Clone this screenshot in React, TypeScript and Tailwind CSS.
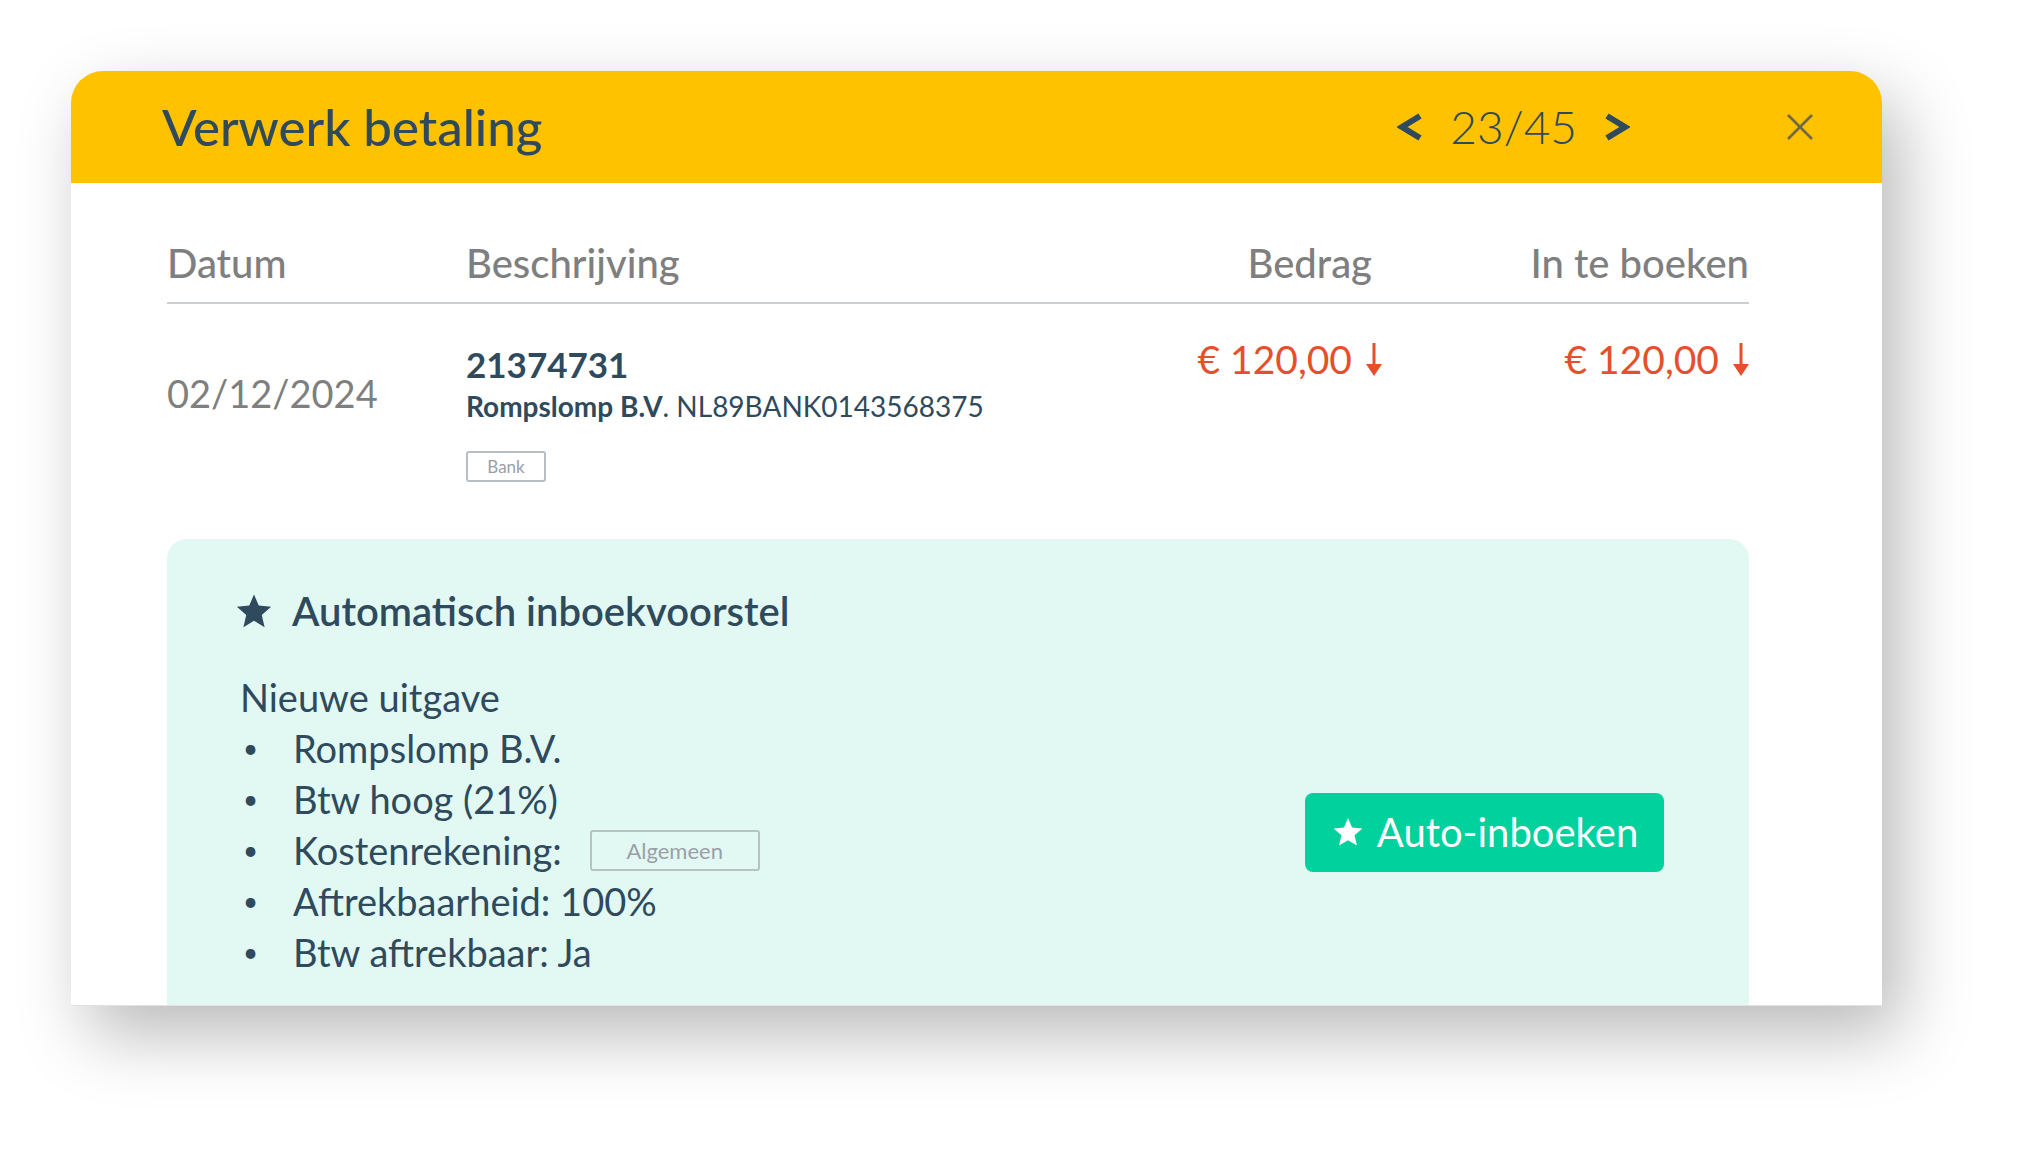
import React from "react";

const dark = "text-[#2e4a5c]";

const Star = ({ className }: { className?: string }) => (
  <svg viewBox="0 0 24 24" className={className} fill="currentColor">
    <polygon points="12,1.5 15,8.6 22.8,9.3 16.9,14.5 18.7,22.2 12,18.1 5.3,22.2 7.1,14.5 1.2,9.3 9,8.6" />
  </svg>
);

const DownArrow = () => (
  <svg viewBox="0 0 16 33" className="w-[16px] h-[33px] ml-[14px]" fill="currentColor">
    <rect x="6.5" y="0" width="3" height="24" />
    <polygon points="0,21 16,21 8,33" />
  </svg>
);

const Chevron = ({ dir }: { dir: "left" | "right" }) => (
  <svg viewBox="0 0 26 28" className="w-[26px] h-[28px]" fill="none" stroke="currentColor" strokeWidth="6" strokeLinejoin="miter">
    {dir === "left" ? <polyline points="23,3 5,14 23,25" /> : <polyline points="3,3 21,14 3,25" />}
  </svg>
);

const Amount = () => (
  <div className="flex items-center text-[#e5502b] text-[39px] leading-[44px] -mt-[5px]">
    <span>€ 120,00</span>
    <DownArrow />
  </div>
);

const items = ["Rompslomp B.V.", "Btw hoog (21%)", "Kostenrekening:", "Aftrekbaarheid: 100%", "Btw aftrekbaar: Ja"];

export default function App() {
  return (
    <div
      className="w-[2026px] h-[1153px] bg-white overflow-hidden pl-[71px] pt-[71px]"
      style={{ fontFamily: "Lato, 'Noto Sans', sans-serif" }}
    >
      <div className="w-[1811px] h-[935px] bg-white rounded-t-[32px] overflow-hidden shadow-[18px_28px_70px_rgba(0,0,0,0.28)] flex flex-col border-b border-[#e2e2e2]">
        {/* header */}
        <div className="h-[112px] shrink-0 bg-[#ffc200] flex items-center pl-[91px] pr-[69px]">
          <h1 className={`flex-1 text-[51px] font-medium ${dark}`}>Verwerk betaling</h1>
          <div className={`flex items-center gap-[27px] ${dark}`}>
            <Chevron dir="left" />
            <span className="text-[46px] font-light leading-none">23/45</span>
            <Chevron dir="right" />
          </div>
          <svg viewBox="0 0 26 26" className="w-[26px] h-[26px] ml-[157px] text-[#6f6a43]" stroke="currentColor" strokeWidth="2.6">
            <line x1="1" y1="1" x2="25" y2="25" />
            <line x1="25" y1="1" x2="1" y2="25" />
          </svg>
        </div>

        {/* body */}
        <div className="flex-1 pl-[96px] pr-[133px] pt-[58px]">
          <div className="grid grid-cols-[299px_1fr_260px_367px] text-[40px] font-medium text-[#7f7f7f] leading-[44px] pb-[17px] border-b-2 border-[#c8cfd5]">
            <div>Datum</div>
            <div>Beschrijving</div>
            <div className="text-right pr-[10px]">Bedrag</div>
            <div className="text-right">In te boeken</div>
          </div>

          <div className="grid grid-cols-[299px_1fr_260px_367px] pt-[38px]">
            <div className="text-[38px] text-[#7f7f7f] pt-[29px] leading-[44px]">02/12/2024</div>
            <div className={dark}>
              <div className="text-[35px] font-bold leading-[44px]">21374731</div>
              <div className="text-[28px] leading-[36px] mt-[2px]">
                <span className="font-bold">Rompslomp B.V</span>. NL89BANK0143568375
              </div>
              <div className="mt-[27px] w-[80px] h-[31px] border-2 border-[#b8bec3] rounded-[3px] text-[17px] text-[#9aa0a6] flex items-center justify-center">
                Bank
              </div>
            </div>
            <div className="flex justify-end items-start">
              <Amount />
            </div>
            <div className="flex justify-end items-start">
              <Amount />
            </div>
          </div>

          {/* suggestion panel */}
          <div className="mt-[57px] bg-[#e2f8f3] rounded-t-[20px] h-[600px] pl-[67px] pr-[85px] pt-[52px]">
            <div className={`flex items-center ${dark}`}>
              <Star className="w-[40px] h-[38px]" />
              <span className="ml-[18px] text-[40px] font-semibold leading-[40px]">Automatisch inboekvoorstel</span>
            </div>
            <div className={`flex items-center mt-[41px] ${dark}`}>
              <div className="flex-1 text-[38px] leading-[51px]">
                <div className="pl-[6px]">Nieuwe uitgave</div>
                <ul>
                  {items.map((t) => (
                    <li key={t} className="flex items-center">
                      <span className="w-[59px] pl-[9px] text-[26px]">•</span>
                      <span>{t}</span>
                      {t === "Kostenrekening:" && (
                        <span className="ml-[28px] w-[170px] h-[41px] border-2 border-[#b7c2c2] rounded-[3px] text-[22px] text-[#9aa0a6] flex items-center justify-center leading-none">
                          Algemeen
                        </span>
                      )}
                    </li>
                  ))}
                </ul>
              </div>
              <button className="w-[359px] h-[79px] bg-[#00d19d] rounded-[8px] text-white text-[40px] flex items-center justify-center gap-[12px] mt-[14px]">
                <Star className="w-[34px] h-[32px]" />
                <span>Auto-inboeken</span>
              </button>
            </div>
          </div>
        </div>
      </div>
    </div>
  );
}
